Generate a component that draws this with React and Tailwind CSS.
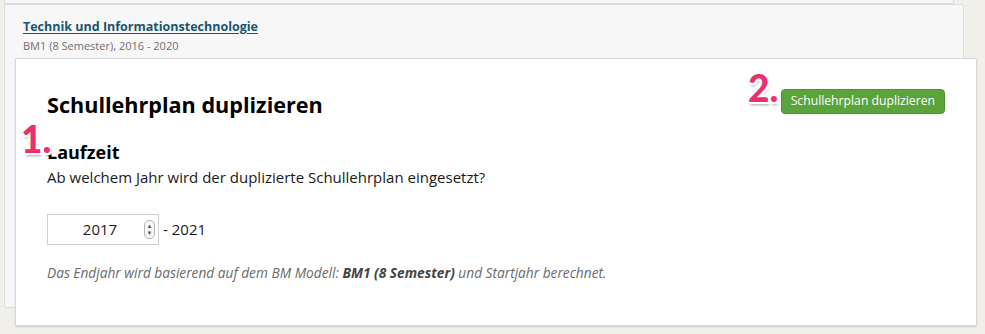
import React, { useState } from "react";

const brand = { fontFamily: "'Open Sans', 'Noto Sans', sans-serif" };

// pink step markers sitting on top of the dialog
const StepMark = ({ n, className }) => (
  <span
    className={`absolute text-[37px] leading-none text-[#ec2f6b] ${className}`}
    style={{
      fontFamily: "Lato, sans-serif",
      fontWeight: 900,
      textShadow:
        "-2px -2px 0 #fff, 2px -2px 0 #fff, -2px 2px 0 #fff, 2px 2px 0 #fff, 0 -2px 0 #fff, 0 2px 0 #fff, 1px 3px 3px rgba(0,0,0,0.35)",
    }}
  >
    {n}.
  </span>
);

const App = () => {
  const [year, setYear] = useState(2017);

  return (
    <div
      className="relative w-[985px] h-[334px] overflow-hidden bg-[#f0efe9]"
      style={brand}
    >
      {/* previous list card, only its bottom edge is visible */}
      <div className="absolute left-[4px] top-[-10px] w-[950px] h-[14px] bg-[#f7f7f7] border border-[#dcdcdc]" />

      {/* list card in the background */}
      <div className="ml-[4px] mt-[4px] w-[960px] h-[304px] bg-[#f7f7f7] border border-[#dcdcdc] rounded-[2px] px-[18px] pt-[8px]">
        <a
          href="#"
          className="text-[12.5px] font-bold text-[#1b5570] underline underline-offset-2"
        >
          Technik und Informationstechnologie
        </a>
        <p className="mt-[1px] text-[11px] text-[#707070]">
          BM1 (8 Semester), 2016 - 2020
        </p>
      </div>

      {/* dialog */}
      <div className="absolute left-[15px] top-[58px] w-[962px] h-[268px] bg-white border border-[#d8d8d8] rounded-[2px] shadow-[0_1px_2px_rgba(0,0,0,0.15)] pl-[31px] pr-[31px] pt-[30px]">
        <div className="flex items-start justify-between">
          <h2 className="text-[21.6px] font-bold text-black leading-[30px] mt-[1px]">
            Schullehrplan duplizieren
          </h2>
          <button
            className="h-[25px] px-[9px] rounded-[4px] bg-[#5ba33b] border border-[#4e9232] text-white text-[12.2px] leading-none"
            style={{ fontFamily: "'Open Sans', sans-serif" }}
          >
            Schullehrplan duplizieren
          </button>
        </div>

        <h3 className="mt-[20px] text-[18px] font-bold text-black leading-[24px]">
          Laufzeit
        </h3>
        <p className="mt-[2px] text-[15px] text-[#1a1a1a] leading-[22px]">
          Ab welchem Jahr wird der duplizierte Schullehrplan eingesetzt?
        </p>

        <div className="mt-[26px] flex items-center gap-[4px]">
          <div className="flex items-center w-[112px] h-[31px] border border-[#cfcfcf] bg-white pl-[8px] pr-[3px]">
            <span className="flex-1 text-center text-[15px] text-[#1a1a1a]">
              {year}
            </span>
            <div className="flex flex-col items-center justify-center w-[11px] h-[19px] rounded-[5px] border border-[#b5b5b5] bg-[#f6f6f6]">
              <button
                onClick={() => setYear(year + 1)}
                className="text-[6px] leading-[7px] text-[#555]"
              >
                ▲
              </button>
              <button
                onClick={() => setYear(year - 1)}
                className="text-[6px] leading-[7px] text-[#555]"
              >
                ▼
              </button>
            </div>
          </div>
          <span className="text-[15px] text-[#1a1a1a]">- {year + 4}</span>
        </div>

        <p className="mt-[18px] text-[13.7px] italic text-[#6a6a6a]">
          Das Endjahr wird basierend auf dem BM Modell:{" "}
          <b className="font-bold text-[#444]">BM1 (8 Semester)</b> und
          Startjahr berechnet.
        </p>
      </div>

      <StepMark n={1} className="left-[21px] top-[120px]" />
      <StepMark n={2} className="left-[748px] top-[69px]" />
    </div>
  );
};

export default App;
